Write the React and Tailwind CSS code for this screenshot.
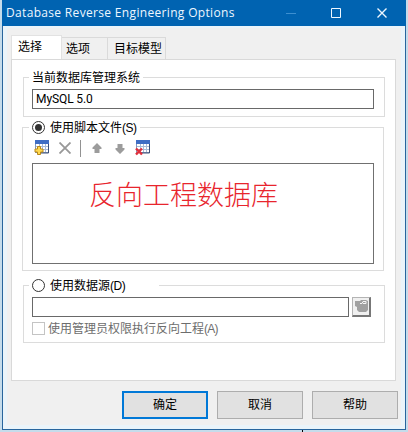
import React from "react";

const GridIcon = ({ badge }) => (
  <svg width="16" height="16" viewBox="0 0 16 16" className="shrink-0">
    <rect x="1.5" y="1.5" width="13" height="11" fill="#fff" stroke="#8296b8" />
    <rect x="1" y="0" width="14" height="4" fill="#3f6dc4" />
    <path d="M2 6.5h12M2 9.5h12M5.5 4v8M8.5 4v8M11.5 4v8" stroke="#a9bbd8" fill="none" />
    <path d="M14.5 4v9H6" stroke="#3c5078" fill="none" />
    {badge === "add" ? (
      <path
        d="M3.500 6.500h3v2.500h2.500v3h-2.500v2.500h-3v-2.500h-2.500v-3h2.500z"
        fill="#ffd94f"
        stroke="#b98718"
      />
    ) : (
      <path d="M1 8.500l6 6M7 8.500l-6 6" stroke="#e0303c" strokeWidth="2.4" fill="none" />
    )}
  </svg>
);

const ArrowIcon = ({ down }) => (
  <svg width="10" height="11" viewBox="0 0 10 11" className={down ? "rotate-180" : ""}>
    <path d="M5 0l4.500 4.500v1.500H7.500v4H2.500V6H0.500V4.500z" fill="#9c9c9c" />
  </svg>
);

const Radio = ({ checked }) => (
  <span className="-mt-px flex h-[13px] w-[13px] shrink-0 items-center justify-center rounded-full border border-[#333] bg-white">
    {checked && <span className="h-[7px] w-[7px] rounded-full bg-[#333]"></span>}
  </span>
);

const Group = ({ legend, className }) => (
  <div className={`flex h-3 items-center text-[12px] leading-3 ${className}`}>
    <span className="-ml-[3px] flex items-center whitespace-nowrap bg-white px-[3px]">
      {legend}
    </span>
  </div>
);

const DialogButton = ({ label, primary }) => (
  <button
    className={`h-[28px] w-[86px] bg-[#e1e1e1] text-[12px] leading-none ${
      primary ? "border-2 border-[#0078d7]" : "border border-[#adadad]"
    }`}
  >
    {label}
  </button>
);

const App = () => {
  return (
    <div className="h-[432px] w-[408px] overflow-hidden bg-[#c5dceb] pl-[2px] font-['Liberation_Sans','Noto_Sans_CJK_SC',sans-serif] text-[12px] text-black">
      <div className="flex h-[430px] w-[404px] flex-col border border-t-0 border-[#28659d] bg-[#f0f0f0]">
        {/* Title bar */}
        <div className="-mx-px flex h-[26px] shrink-0 items-center bg-[#0063b1] pl-[4px] text-[#eef7ff]">
          <span className="whitespace-nowrap font-['Open_Sans',sans-serif] text-[12px] leading-none tracking-[0.33px]">
            Database Reverse Engineering Options
          </span>
          <svg width="120" height="26" viewBox="0 0 120 26" className="ml-auto shrink-0" fill="none">
            <path d="M0 13.5h10" stroke="#3d8fd0" />
            <path d="M45.5 8.5h9v9h-9z" stroke="#eef7ff" />
            <path d="M91.500 8.500l9 9M100.500 8.500l-9 9" stroke="#eef7ff" strokeWidth="1.4" />
          </svg>
        </div>

        <div className="flex grow flex-col border-x-4 border-b-4 border-t-2 border-[#eaf4fa] px-1 pt-[7px]">
          {/* Tabs */}
          <div className="flex h-[24px] items-end leading-none">
            <div className="-mb-px flex h-[25px] w-[51px] items-center border border-b-0 border-[#e2e2e2] bg-white pb-[2px] pl-[6px]">
              选择
            </div>
            <div className="flex h-[22px] w-[46px] items-center border border-b-0 border-l-0 border-[#dadada] pl-1 pt-px">
              选项
            </div>
            <div className="flex h-[22px] w-[58px] items-center border border-b-0 border-l-0 border-[#dadada] pl-[6px] pt-px">
              目标模型
            </div>
          </div>

          {/* Tab page */}
          <div className="h-[322px] w-[385px] shrink-0 border border-[#d9d9d9] bg-white pl-[11px] pt-[17px]">
            <div className="h-[40px] w-[362px] border border-[#dcdcdc] px-[8px]">
              <Group legend="当前数据库管理系统" className="-mt-[6px]" />
              <div className="mt-[5px] flex h-[20px] w-[342px] items-center border border-[#696969] pl-[3px] font-['Roboto',sans-serif] tracking-[-0.1px]">
                MySQL 5.0
              </div>
            </div>

            <div className="-ml-px mt-[10px] h-[144px] w-[362px] border border-[#dcdcdc] px-[9px]">
              <Group
                className="-mt-[6px]"
                legend={
                  <>
                    <Radio checked />
                    <span className="ml-[5px]">
                      使用脚本文件<span className="tracking-[-0.5px]">(S)</span>
                    </span>
                  </>
                }
              />
              <div className="mt-[5px] flex h-[18px] items-center pl-[2px]">
                <GridIcon badge="add" />
                <svg width="12" height="12" viewBox="0 0 12 12" className="ml-[9px]">
                  <path d="M0.500 0.500l11 11M11.500 0.500l-11 11" stroke="#989898" strokeWidth="1.8" />
                </svg>
                <span className="ml-[9px] mr-[11px] h-[17px] w-px bg-[#929292]"></span>
                <ArrowIcon />
                <span className="w-[13px]"></span>
                <ArrowIcon down />
                <span className="w-[10px]"></span>
                <GridIcon badge="remove" />
              </div>
              <div className="mt-[6px] h-[101px] w-[342px] border border-[#707070] pl-[56px] pt-[15px] font-['Noto_Sans_CJK_SC',sans-serif] text-[27px] font-light leading-[30px] text-[#e8252d]">
                反向工程数据库
              </div>
            </div>

            <div className="mt-[14px] h-[58px] w-[362px] border border-[#dcdcdc] px-[8px]">
              <Group
                className="-mt-[6px]"
                legend={
                  <>
                    <Radio />
                    <span className="ml-[5px] w-[106px]">
                      使用数据源<span className="tracking-[-0.5px]">(D)</span>
                    </span>
                  </>
                }
              />
              <div className="mt-[5px] flex gap-[3px]">
                <div className="h-[20px] w-[317px] border border-[#696969]"></div>
                <div className="flex h-[20px] w-[19px] items-center justify-center border border-b-2 border-r-2 border-[#b4b4b4] border-b-[#777] border-r-[#777] bg-[#f0f0f0]">
                  <svg width="13" height="13" viewBox="0 0 13 13" className="shrink-0">
                    <path d="M0 1h5l1-1h5l2 1v9l-2 2H4L2 10V7L0 6z" fill="#a0a0a0" />
                    <path d="M5 3.500h2l1-2h3v2H8" stroke="#f5f5f5" fill="none" />
                  </svg>
                </div>
              </div>
              <div className="mt-[5px] flex h-[13px] items-center whitespace-nowrap leading-none text-[#6d6d6d]">
                <span className="mr-[3px] h-[13px] w-[13px] shrink-0 border border-[#c4c4c4]"></span>
                使用管理员权限执行反向工程<span className="tracking-[-0.8px]">(A)</span>
              </div>
            </div>
          </div>

          <div className="-mr-px mt-[10px] flex justify-end gap-[9px]">
            <DialogButton label="确定" primary />
            <DialogButton label="取消" />
            <DialogButton label="帮助" />
          </div>
        </div>
      </div>
      <div className="ml-[300px] h-[2px] w-px bg-black"></div>
    </div>
  );
};

export default App;
